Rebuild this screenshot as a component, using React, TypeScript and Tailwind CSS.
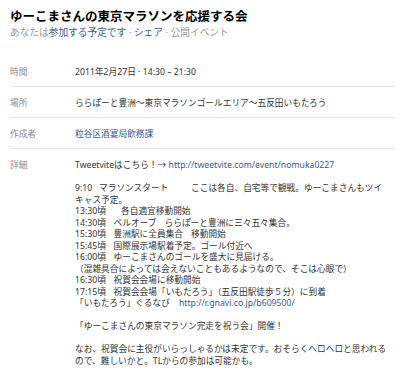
import React from "react";

const FONT = {
  fontFamily: '"Noto Sans", "Noto Sans CJK JP", sans-serif',
};

function Row({
  label,
  children,
  last,
}: {
  label: string;
  children: React.ReactNode;
  last?: boolean;
}) {
  return (
    <div
      className={
        "flex pt-[11px] pb-[7.5px] " +
        (last ? "" : "border-b border-[#e6e6e6]")
      }
    >
      <div className="w-[65px] shrink-0 text-[#8a8a8a]">{label}</div>
      <div className="flex-1 text-[#333]">{children}</div>
    </div>
  );
}

export default function App() {
  const link = "text-[#3b5998]";
  return (
    <div
      className="w-[400px] h-[379px] bg-white overflow-hidden"
      style={{ fontFamily: '"Noto Sans CJK JP", sans-serif' }}
    >
      <div className="pl-[10px] pr-[5px] pt-[7px]">
        <h1 className="text-[12.5px] leading-[18px] font-bold text-black whitespace-nowrap">
          ゆーこまさんの東京マラソンを応援する会
        </h1>
        <div className="text-[9.7px] leading-[14px] text-[#999] whitespace-nowrap">
          あなたは<span className={link}>参加する予定です</span>
          <span style={FONT}> · </span>
          <span className={link}>シェア</span>
          <span style={FONT}> · </span>公開イベント
        </div>

        <div className="mt-[16px] text-[8.7px] leading-[11.5px]" style={FONT}>
          <Row label="時間">2011年2月27日 · 14:30 – 21:30</Row>
          <Row label="場所">
            ららぽーと豊洲〜東京マラソンゴールエリア〜五反田いもたろう
          </Row>
          <Row label="作成者">
            <span className={link}>粒谷区酒宴局飲務課</span>
          </Row>
          <Row label="詳細" last>
            <div className="whitespace-nowrap">
              <div>
                Tweetviteはこちら！→{" "}
                <span className={link}>http://tweetvite.com/event/nomuka0227</span>
              </div>
              <div className="h-[11.5px]" />
              <div>
                <span className="inline-block w-[24px]">9:10</span>
                <span className="inline-block w-[92px]">マラソンスタート</span>
                ここは各自、自宅等で観戦。ゆーこまさんもツイ
              </div>
              <div>キャス予定。</div>
              <div>
                <span className="inline-block w-[46px]">13:30頃</span>
                各自適宜移動開始
              </div>
              <div>
                <span className="inline-block w-[38.5px]">14:30頃</span>
                <span className="inline-block w-[51px]">ベルオーブ</span>
                ららぽーと豊洲に三々五々集合。
              </div>
              <div>
                <span className="inline-block w-[38.5px]">15:30頃</span>
                <span className="inline-block w-[77.5px]">豊洲駅に全員集合</span>
                移動開始
              </div>
              <div>
                <span className="inline-block w-[38.5px]">15:45頃</span>
                国際展示場駅着予定。ゴール付近へ
              </div>
              <div>
                <span className="inline-block w-[38.5px]">16:00頃</span>
                ゆーこまさんのゴールを盛大に見届ける。
              </div>
              <div>（混雑具合によっては会えないこともあるようなので、そこは心眼で）</div>
              <div>
                <span className="inline-block w-[38.5px]">16:30頃</span>
                祝賀会会場に移動開始
              </div>
              <div>
                <span className="inline-block w-[38.5px]">17:15頃</span>
                祝賀会会場「いもたろう」（五反田駅徒歩５分）に到着
              </div>
              <div>
                「いもたろう」ぐるなび
                <span className="inline-block w-[9px]" />
                <span className={link}>http://r.gnavi.co.jp/b609500/</span>
              </div>
              <div className="h-[11.5px]" />
              <div>「ゆーこまさんの東京マラソン完走を祝う会」開催！</div>
              <div className="h-[11.5px]" />
              <div>なお、祝賀会に主役がいらっしゃるかは未定です。おそらくヘロヘロと思われる</div>
              <div>ので、難しいかと。TLからの参加は可能かも。</div>
            </div>
          </Row>
        </div>
      </div>
    </div>
  );
}
